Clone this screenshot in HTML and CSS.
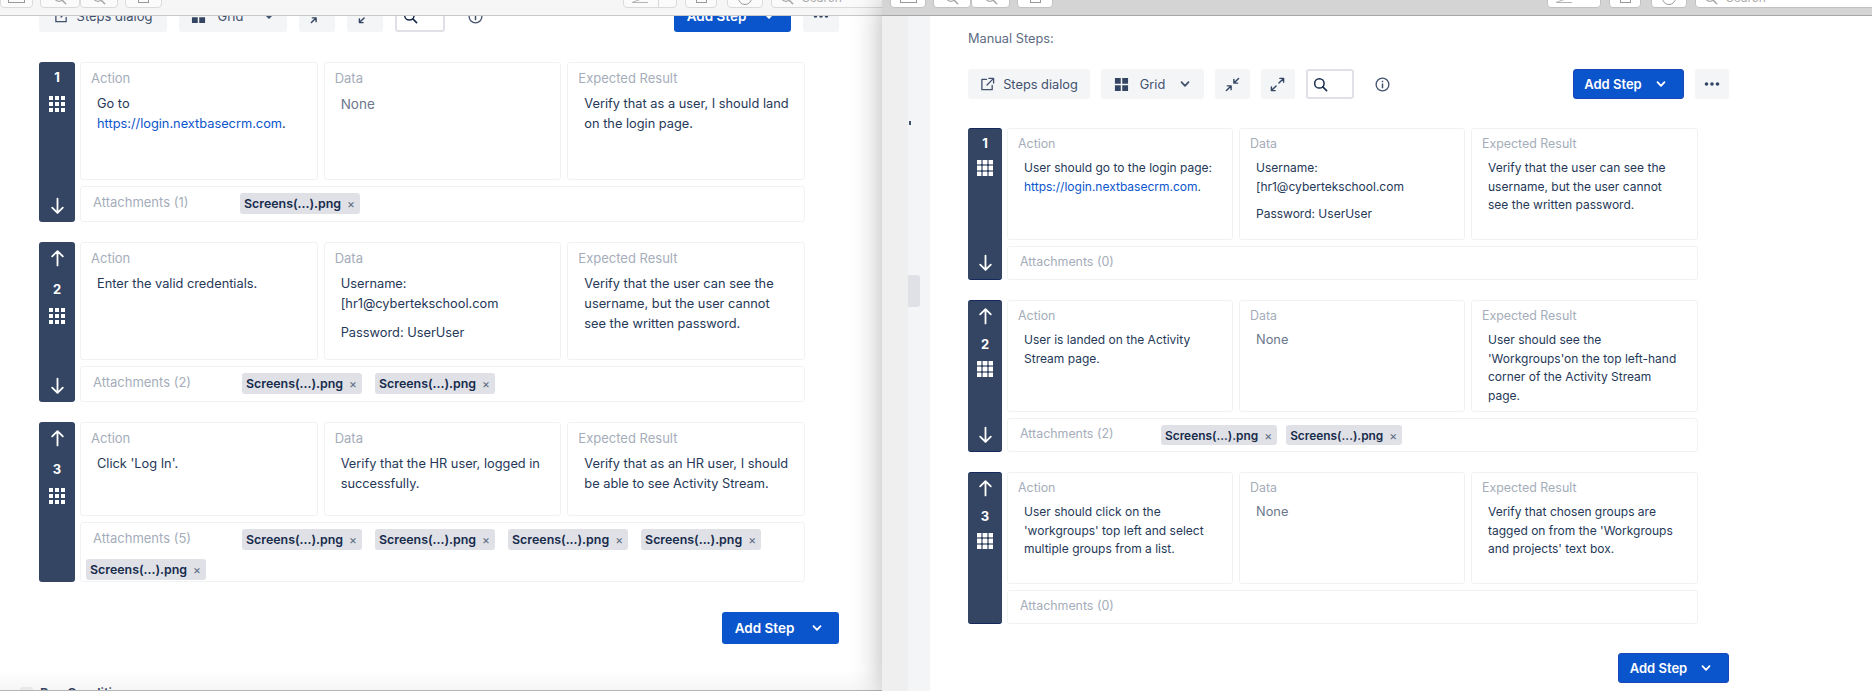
FILE: index.html
```html
<!DOCTYPE html>
<html lang="en">
<head>
  <meta charset="UTF-8" />
  <title>Manual Steps</title>
  <link rel="stylesheet" href="styles.css">
</head>
<body>
  <svg class="sprite" width="0" height="0">
    <symbol id="i-grid" viewBox="0 0 16 16"><path fill="currentColor" d="M0 0h4v4H0zM6 0h4v4H6zM12 0h4v4h-4zM0 6h4v4H0zM6 6h4v4H6zM12 6h4v4h-4zM0 12h4v4H0zM6 12h4v4H6zM12 12h4v4h-4z"/></symbol>
    <symbol id="i-up" viewBox="0 0 16 16"><path fill="none" stroke="currentColor" stroke-width="1.7" stroke-linecap="round" stroke-linejoin="round" d="M8 15V1.5M3 6.5l5-5 5 5"/></symbol>
    <symbol id="i-down" viewBox="0 0 16 16"><path fill="none" stroke="currentColor" stroke-width="1.7" stroke-linecap="round" stroke-linejoin="round" d="M8 1v13.5M3 9.500l5 5 5-5"/></symbol>
    <symbol id="i-ext" viewBox="0 0 16 16"><path fill="none" stroke="currentColor" stroke-width="1.4" stroke-linecap="round" stroke-linejoin="round" d="M7 2.500H2v11h11V9M9.500 1.500h5v5M14.500 1.500L7.500 8.500"/></symbol>
    <symbol id="i-tiles" viewBox="0 0 16 16"><path fill="currentColor" d="M1 1h6.200v6.200H1zM8.800 1H15v6.200H8.800zM1 8.800h6.200V15H1zM8.800 8.800H15V15H8.800z"/></symbol>
    <symbol id="i-chev" viewBox="0 0 12 12"><path fill="none" stroke="currentColor" stroke-width="1.8" stroke-linecap="round" stroke-linejoin="round" d="M2.500 4.200L6 7.800l3.500-3.600"/></symbol>
    <symbol id="i-in" viewBox="0 0 16 16"><path fill="none" stroke="currentColor" stroke-width="1.5" stroke-linecap="round" stroke-linejoin="round" d="M14.500 1.500L9.800 6.200M9.500 2.500v4h4M1.500 14.500l4.700-4.700M2.500 9.500h4v4"/></symbol>
    <symbol id="i-out" viewBox="0 0 16 16"><path fill="none" stroke="currentColor" stroke-width="1.500" stroke-linecap="round" stroke-linejoin="round" d="M9.500 6.500l5-5M10.500 1.500h4v4M6.500 9.500l-5 5M1.500 10.500v4h4"/></symbol>
    <symbol id="i-search" viewBox="0 0 16 16"><circle cx="6.800" cy="6.800" r="5" fill="none" stroke="currentColor" stroke-width="1.600"/><path stroke="currentColor" stroke-width="1.700" stroke-linecap="round" d="M10.500 10.500l4 4"/></symbol>
    <symbol id="i-info" viewBox="0 0 16 16"><circle cx="8" cy="8" r="6.800" fill="none" stroke="currentColor" stroke-width="1.400"/><path fill="currentColor" d="M7.200 7h1.600v5H7.200zM7.200 4h1.600v1.700H7.200z"/></symbol>
    <symbol id="i-more" viewBox="0 0 16 4"><circle cx="2.500" cy="2" r="1.800" fill="currentColor"/><circle cx="8" cy="2" r="1.800" fill="currentColor"/><circle cx="13.500" cy="2" r="1.800" fill="currentColor"/></symbol>
    <symbol id="i-wedge" viewBox="0 0 18 16"><path fill="none" stroke="currentColor" d="M1 15.500h16M1 15.500L16 10"/></symbol>
  </svg>

  <div class="window left">
    <div class="chrome">
      <div class="chrome-group">
        <span class="cbtn w33"><i class="box wide"></i></span>
        <span class="cbtn joined w40"><svg class="cic"><use href="#i-search"/></svg></span>
        <span class="cbtn joined w38"><svg class="cic"><use href="#i-search"/></svg></span>
        <span class="cbtn w37"><i class="box"></i></span>
      </div>
      <div class="chrome-group">
        <span class="cbtn w54 split"><svg class="wedge"><use href="#i-wedge"/></svg></span>
        <span class="cbtn w32"><i class="box"></i></span>
        <span class="cbtn w36"><i class="dot"></i></span>
        <span class="cbtn search-field"><svg class="cic"><use href="#i-search"/></svg>Search</span>
      </div>
    </div>
    <div class="pane">
      <div class="content">
        <div class="toolbar">
          <button class="tbtn dialog"><svg class="ic"><use href="#i-ext"/></svg>Steps dialog</button>
          <button class="tbtn view"><svg class="ic"><use href="#i-tiles"/></svg>Grid<svg class="chev"><use href="#i-chev"/></svg></button>
          <button class="tbtn square"><svg class="ic"><use href="#i-in"/></svg></button>
          <button class="tbtn square"><svg class="ic"><use href="#i-out"/></svg></button>
          <div class="find"><svg class="ic"><use href="#i-search"/></svg></div>
          <svg class="ic info"><use href="#i-info"/></svg>
          <button class="add-step"><span>Add Step</span><svg class="chev"><use href="#i-chev"/></svg></button>
          <button class="tbtn square more"><svg class="dots"><use href="#i-more"/></svg></button>
        </div>

        <div class="step">
          <div class="rail">
            <b class="num">1</b>
            <svg class="handle"><use href="#i-grid"/></svg>
            <svg class="arrow bottom"><use href="#i-down"/></svg>
          </div>
          <div class="fields">
            <div class="cell"><h4>Action</h4><p>Go to <a href="#">https://login.nextbasecrm.com</a>.</p></div>
            <div class="cell"><h4>Data</h4><p class="none">None</p></div>
            <div class="cell"><h4>Expected Result</h4><p>Verify that as a user, I should land on the login page.</p></div>
            <div class="attach"><span class="attach-label first">Attachments (1)</span><span class="tag">Screens(...).png<em>×</em></span></div>
          </div>
        </div>

        <div class="step">
          <div class="rail">
            <svg class="arrow top"><use href="#i-up"/></svg>
            <b class="num">2</b>
            <svg class="handle"><use href="#i-grid"/></svg>
            <svg class="arrow bottom"><use href="#i-down"/></svg>
          </div>
          <div class="fields">
            <div class="cell"><h4>Action</h4><p>Enter the valid credentials.</p></div>
            <div class="cell"><h4>Data</h4><p>Username: [hr1@cybertekschool.com</p><p class="next">Password: UserUser</p></div>
            <div class="cell"><h4>Expected Result</h4><p>Verify that the user can see the username, but the user cannot see the written password.</p></div>
            <div class="attach"><span class="attach-label">Attachments (2)</span><span class="tag">Screens(...).png<em>×</em></span><span class="tag">Screens(...).png<em>×</em></span></div>
          </div>
        </div>

        <div class="step short">
          <div class="rail">
            <svg class="arrow top"><use href="#i-up"/></svg>
            <b class="num">3</b>
            <svg class="handle"><use href="#i-grid"/></svg>
          </div>
          <div class="fields">
            <div class="cell"><h4>Action</h4><p>Click 'Log In'.</p></div>
            <div class="cell"><h4>Data</h4><p>Verify that the HR user, logged in successfully.</p></div>
            <div class="cell"><h4>Expected Result</h4><p>Verify that as an HR user, I should be able to see Activity Stream.</p></div>
            <div class="attach"><span class="attach-label">Attachments (5)</span><span class="tag">Screens(...).png<em>×</em></span><span class="tag">Screens(...).png<em>×</em></span><span class="tag">Screens(...).png<em>×</em></span><span class="tag">Screens(...).png<em>×</em></span><span class="tag">Screens(...).png<em>×</em></span></div>
          </div>
        </div>

        <div class="foot-actions"><button class="add-step"><span>Add Step</span><svg class="chev"><use href="#i-chev"/></svg></button></div>
      </div>
      <div class="pane-foot"><i class="check"></i>Pre-Condition</div>
    </div>
  </div>

  <div class="window right">
    <div class="chrome">
      <div class="chrome-group">
        <span class="cbtn w36"><i class="box wide"></i></span>
        <span class="cbtn joined w38"><svg class="cic"><use href="#i-search"/></svg></span>
        <span class="cbtn joined w39"><svg class="cic"><use href="#i-search"/></svg></span>
        <span class="cbtn w36"><i class="box"></i></span>
      </div>
      <div class="chrome-group">
        <span class="cbtn w54 split"><svg class="wedge"><use href="#i-wedge"/></svg></span>
        <span class="cbtn w32"><i class="box"></i></span>
        <span class="cbtn w36"><i class="dot"></i></span>
        <span class="cbtn search-field"><svg class="cic"><use href="#i-search"/></svg>Search</span>
      </div>
    </div>
    <div class="pane">
      <div class="side-gray"></div>
      <div class="side-blue"><i class="side-tick"></i><i class="side-thumb"></i></div>
      <div class="content">
        <div class="manual-title">Manual Steps:</div>
        <div class="toolbar">
          <button class="tbtn dialog"><svg class="ic"><use href="#i-ext"/></svg>Steps dialog</button>
          <button class="tbtn view"><svg class="ic"><use href="#i-tiles"/></svg>Grid<svg class="chev"><use href="#i-chev"/></svg></button>
          <button class="tbtn square"><svg class="ic"><use href="#i-in"/></svg></button>
          <button class="tbtn square"><svg class="ic"><use href="#i-out"/></svg></button>
          <div class="find"><svg class="ic"><use href="#i-search"/></svg></div>
          <svg class="ic info"><use href="#i-info"/></svg>
          <button class="add-step"><span>Add Step</span><svg class="chev"><use href="#i-chev"/></svg></button>
          <button class="tbtn square more"><svg class="dots"><use href="#i-more"/></svg></button>
        </div>

        <div class="step">
          <div class="rail">
            <b class="num">1</b>
            <svg class="handle"><use href="#i-grid"/></svg>
            <svg class="arrow bottom"><use href="#i-down"/></svg>
          </div>
          <div class="fields">
            <div class="cell"><h4>Action</h4><p>User should go to the login page: <a href="#">https://login.nextbasecrm.com</a>.</p></div>
            <div class="cell"><h4>Data</h4><p>Username: [hr1@cybertekschool.com</p><p class="next">Password: UserUser</p></div>
            <div class="cell"><h4>Expected Result</h4><p>Verify that the user can see the username, but the user cannot see the written password.</p></div>
            <div class="attach"><span class="attach-label">Attachments (0)</span></div>
          </div>
        </div>

        <div class="step">
          <div class="rail">
            <svg class="arrow top"><use href="#i-up"/></svg>
            <b class="num">2</b>
            <svg class="handle"><use href="#i-grid"/></svg>
            <svg class="arrow bottom"><use href="#i-down"/></svg>
          </div>
          <div class="fields">
            <div class="cell"><h4>Action</h4><p>User is landed on the Activity Stream page.</p></div>
            <div class="cell"><h4>Data</h4><p class="none">None</p></div>
            <div class="cell"><h4>Expected Result</h4><p>User should see the 'Workgroups'on the top left-hand corner of the Activity Stream page.</p></div>
            <div class="attach"><span class="attach-label">Attachments (2)</span><span class="tag">Screens(...).png<em>×</em></span><span class="tag">Screens(...).png<em>×</em></span></div>
          </div>
        </div>

        <div class="step">
          <div class="rail">
            <svg class="arrow top"><use href="#i-up"/></svg>
            <b class="num">3</b>
            <svg class="handle"><use href="#i-grid"/></svg>
          </div>
          <div class="fields">
            <div class="cell"><h4>Action</h4><p>User should click on the 'workgroups' top left and select multiple groups from a list.</p></div>
            <div class="cell"><h4>Data</h4><p class="none">None</p></div>
            <div class="cell"><h4>Expected Result</h4><p>Verify that chosen groups are tagged on from the 'Workgroups and projects' text box.</p></div>
            <div class="attach"><span class="attach-label">Attachments (0)</span></div>
          </div>
        </div>

        <div class="foot-actions"><button class="add-step"><span>Add Step</span><svg class="chev"><use href="#i-chev"/></svg></button></div>
      </div>
    </div>
  </div>
</body>
</html>
```

FILE: styles.css
```css
* {
  box-sizing: border-box;
}
html, body {
  margin: 0;
  height: 691px;
  overflow: hidden;
}
body {
  display: flex;
  font-family: Inter, "Noto Sans", sans-serif;
  color: #172b4d;
  background: #fff;
}
.sprite {
  display: block;
  width: 0;
  height: 0;
  overflow: hidden;
}
button {
  font-family: inherit;
  border: 0;
  padding: 0;
}

/* windows */
.window {
  height: 691px;
  display: flex;
  flex-direction: column;
  overflow: hidden;
}
.left {
  width: 882px;
  flex: none;
}
.right {
  flex: 1;
  z-index: 1;
  box-shadow: 0 0 28px rgba(0, 0, 0, 0.3);
}

/* browser toolbar, cut off at the top of the shot */
.chrome {
  height: 16px;
  flex: none;
  display: flex;
  justify-content: space-between;
  align-items: flex-end;
  padding-bottom: 7px;
  overflow: hidden;
  background: #f6f6f6;
  border-bottom: 1px solid #c9c9c9;
}
.right .chrome {
  background: #d4d4d4;
  border-bottom-color: #a8a8a8;
  padding-left: 8px;
}
.chrome-group {
  display: flex;
  gap: 7px;
  flex: none;
}
.chrome-group:last-child {
  gap: 8px;
  margin-right: -10px;
}
.left .chrome-group:last-child {
  width: 269px;
}
.right .chrome-group:last-child {
  width: 335px;
}
.cbtn {
  height: 20px;
  flex: none;
  display: flex;
  justify-content: center;
  background: #fbfbfb;
  border: 1px solid #dadada;
  border-radius: 4px;
  overflow: hidden;
}
.right .cbtn {
  background: #fff;
  border-color: #c2c2c2;
}
.joined {
  margin-right: -7px;
}
.joined + .joined {
  margin-right: 0;
}
.w33 { width: 33px; }
.w32 { width: 32px; margin-right: 2px; }
.w36 { width: 36px; }
.w37 { width: 37px; }
.w38 { width: 38px; }
.w39 { width: 39px; }
.w40 { width: 40px; }
.w54 { width: 54px; }
.split {
  padding-right: 20px;
  background: linear-gradient(to right, transparent 34px, #d8d8d8 34px, #d8d8d8 35px, transparent 35px), #fbfbfb;
}
.cic {
  width: 14px;
  height: 14px;
  margin-top: 2px;
  flex: none;
  color: #a6a6a6;
}
.wedge {
  width: 18px;
  height: 16px;
  flex: none;
  margin-top: -2px;
  color: #b5b5b5;
}
.box {
  width: 11px;
  height: 13px;
  margin-top: 1px;
  border: 1px solid #999;
}
.box.wide {
  width: 17px;
  background: linear-gradient(to bottom, transparent 8px, #999 8px, #999 9px, transparent 9px);
}
.dot {
  width: 14px;
  height: 14px;
  margin-top: 2px;
  border: 1px solid #999;
  border-radius: 50%;
}
.search-field {
  flex: 1;
  justify-content: flex-start;
  gap: 8px;
  padding-left: 8px;
  padding-top: 3px;
  font-size: 12px;
  line-height: 12px;
  color: #aaa;
}
.search-field .cic {
  margin-top: -1px;
}

/* page panes */
.pane {
  flex: 1;
  display: flex;
  flex-direction: column;
  min-height: 0;
  overflow: hidden;
}
.right .pane {
  flex-direction: row;
}
.side-gray {
  width: 26px;
  flex: none;
  background: #efefef;
}
.side-blue {
  width: 22px;
  flex: none;
  background: #f4f5f7;
  padding-top: 105px;
}
.side-tick {
  display: block;
  width: 2px;
  height: 4px;
  margin-left: 1px;
  background: #42526e;
}
.side-thumb {
  display: block;
  width: 12px;
  height: 32px;
  margin-top: 150px;
  background: #dfe1e6;
  border-radius: 0 3px 3px 0;
}
.left .content {
  padding-left: 39px;
  width: 839px;
  flex: none;
}
.right .content {
  padding: 15px 0 0 38px;
  width: 800px;
}
.manual-title {
  font-size: 12.800px;
  line-height: 16px;
  color: #5e6c84;
  margin-bottom: 22px;
}

/* toolbar */
.toolbar {
  display: flex;
  align-items: center;
  gap: 12px;
}
.left .toolbar {
  margin-top: -16px;
  margin-bottom: 30px;
  height: 32px;
}
.right .toolbar {
  gap: 11px;
  height: 30px;
  width: 761px;
  margin-bottom: 29px;
}
.tbtn {
  height: 100%;
  display: flex;
  align-items: center;
  justify-content: center;
  background: #f4f5f7;
  border-radius: 3px;
  color: #42526e;
  font-size: 13px;
  font-weight: 400;
}
.left .dialog { width: 128px; gap: 8px; }
.left .view { width: 108px; gap: 12px; }
.right .dialog { width: 122px; gap: 8px; font-size: 12.800px; }
.right .view { width: 103px; gap: 11px; font-size: 12.800px; }
.tbtn .chev {
  margin-left: 8px;
}
.right .tbtn .chev {
  margin-left: 3px;
}
.square {
  width: 36px;
}
.right .square {
  width: 34.500px;
}
.ic {
  width: 15px;
  height: 15px;
  flex: none;
  color: #42526e;
}
.view .ic, .square .ic {
  color: #344563;
}
.find {
  width: 50px;
  height: 100%;
  display: flex;
  align-items: center;
  padding-left: 6px;
  border: 2px solid #dfe1e6;
  border-radius: 3px;
  background: #fff;
}
.right .find {
  width: 48px;
  padding-left: 5px;
}
.find .ic {
  color: #172b4d;
}
.info {
  margin-left: 11px;
}
.right .info {
  margin-left: 10px;
}
.chev {
  width: 12px;
  height: 12px;
  flex: none;
}
.dots {
  width: 16px;
  height: 4px;
  color: #344563;
}
.toolbar .add-step {
  margin-left: auto;
}
.add-step {
  height: 100%;
  display: flex;
  align-items: center;
  justify-content: center;
  gap: 17px;
  padding-right: 3px;
  background: #0b55cc;
  border-radius: 3px;
  color: #fff;
  font-size: 13.500px;
  font-weight: 600;
}
.left .add-step {
  width: 117px;
}
.right .add-step {
  width: 111px;
  font-size: 13px;
  border: 1px solid #1a46b8;
  gap: 13px;
  padding-right: 5px;
}
.foot-actions {
  display: flex;
  justify-content: flex-end;
}
.left .foot-actions {
  height: 32px;
  margin-top: 30px;
  width: 800px;
}
.right .foot-actions {
  height: 30px;
  margin-top: 29px;
  width: 761px;
}

/* steps */
.step {
  display: flex;
  gap: 5px;
}
.left .step {
  width: 766px;
  height: 160px;
  margin-bottom: 20px;
}
.right .step {
  width: 730px;
  height: 152px;
  margin-bottom: 20px;
}
.rail {
  width: 36px;
  flex: none;
  display: flex;
  flex-direction: column;
  align-items: center;
  padding: 7px 0;
  background: #344563;
  border-radius: 3px;
  color: #fff;
}
.right .rail {
  width: 34px;
  padding-top: 6px;
  border-top: 1px solid #14285a;
  border-bottom: 1px solid #14285a;
}
.num {
  font-size: 13px;
  line-height: 16px;
  font-weight: 700;
}
.arrow {
  width: 17px;
  height: 18px;
  flex: none;
}
.arrow.top {
  margin-bottom: 14px;
}
.right .arrow.top {
  margin-bottom: 11px;
}
.arrow.bottom {
  margin-top: auto;
}
.handle {
  width: 16px;
  height: 16px;
  margin-top: 11px;
  flex: none;
}
.right .handle {
  margin-top: 9px;
  stroke: currentColor;
  stroke-width: 0.8;
}
.fields {
  flex: 1;
  display: grid;
  grid-template-columns: repeat(3, 1fr);
  grid-template-rows: 118px 1fr;
  gap: 6px;
}
.short .fields {
  grid-template-rows: 94px 1fr;
}
.right .fields {
  grid-template-columns: 226px 226px 1fr;
  grid-template-rows: 112px 1fr;
}
.cell, .attach {
  background: #fff;
  border: 1px solid #f1f2f4;
  border-radius: 3px;
}
.cell {
  padding: 7px 10px 0;
}
.cell h4 {
  margin: 0 0 8px;
  font-size: 13px;
  line-height: 16px;
  font-weight: 400;
  color: #a5adba;
}
.cell p {
  margin: 0 3px 0 6px;
  font-size: 12.800px;
  line-height: 20px;
  color: #253858;
}
.cell p.next {
  margin-top: 9px;
}
.cell p.none {
  margin-top: 2px;
  font-size: 13.500px;
  color: #6b778c;
}
.cell a {
  color: #0b55cc;
  text-decoration: none;
}
.right .cell h4 {
  font-size: 12.400px;
  margin-bottom: 7px;
}
.right .cell p {
  margin-right: 4px;
  font-size: 12px;
  line-height: 18.700px;
}
.right .cell p.none {
  font-size: 12.800px;
}
.attach {
  grid-column: 1 / -1;
  display: flex;
  flex-wrap: wrap;
  column-gap: 13px;
  row-gap: 7px;
  padding: 6px 0 0 5px;
}
.attach-label {
  margin-top: 1px;
  margin-left: 7px;
  width: 136px;
  font-size: 13px;
  line-height: 16px;
  color: #a5adba;
}
.attach-label.first {
  width: 134px;
}
.right .attach {
  column-gap: 9px;
}
.right .attach-label {
  width: 132px;
  font-size: 12.400px;
}
.tag {
  display: inline-flex;
  align-items: center;
  gap: 6px;
  height: 21px;
  padding: 0 5px 0 4px;
  background: #dfe1e6;
  border-radius: 3px;
  font-size: 12.400px;
  font-weight: 600;
  color: #172b4d;
  white-space: nowrap;
}
.tag em {
  font-style: normal;
  font-weight: 400;
  font-size: 12px;
  color: #5e6c84;
}
.right .tag {
  font-size: 11.900px;
  height: 20px;
}

/* bottom strip of the left window */
.pane-foot {
  height: 34px;
  margin-top: 13px;
  padding: 28px 0 0 40px;
  position: relative;
  font-size: 13px;
  line-height: 16px;
  font-weight: 600;
  color: #344563;
  background: linear-gradient(to bottom, #fff 12px, #f6f6f6);
  border-bottom: 1px solid #b5b5b5;
  overflow: hidden;
}
.check {
  position: absolute;
  left: 20px;
  top: 30px;
  width: 13px;
  height: 13px;
  background: #e8e8e8;
  border-radius: 3px;
}
```
